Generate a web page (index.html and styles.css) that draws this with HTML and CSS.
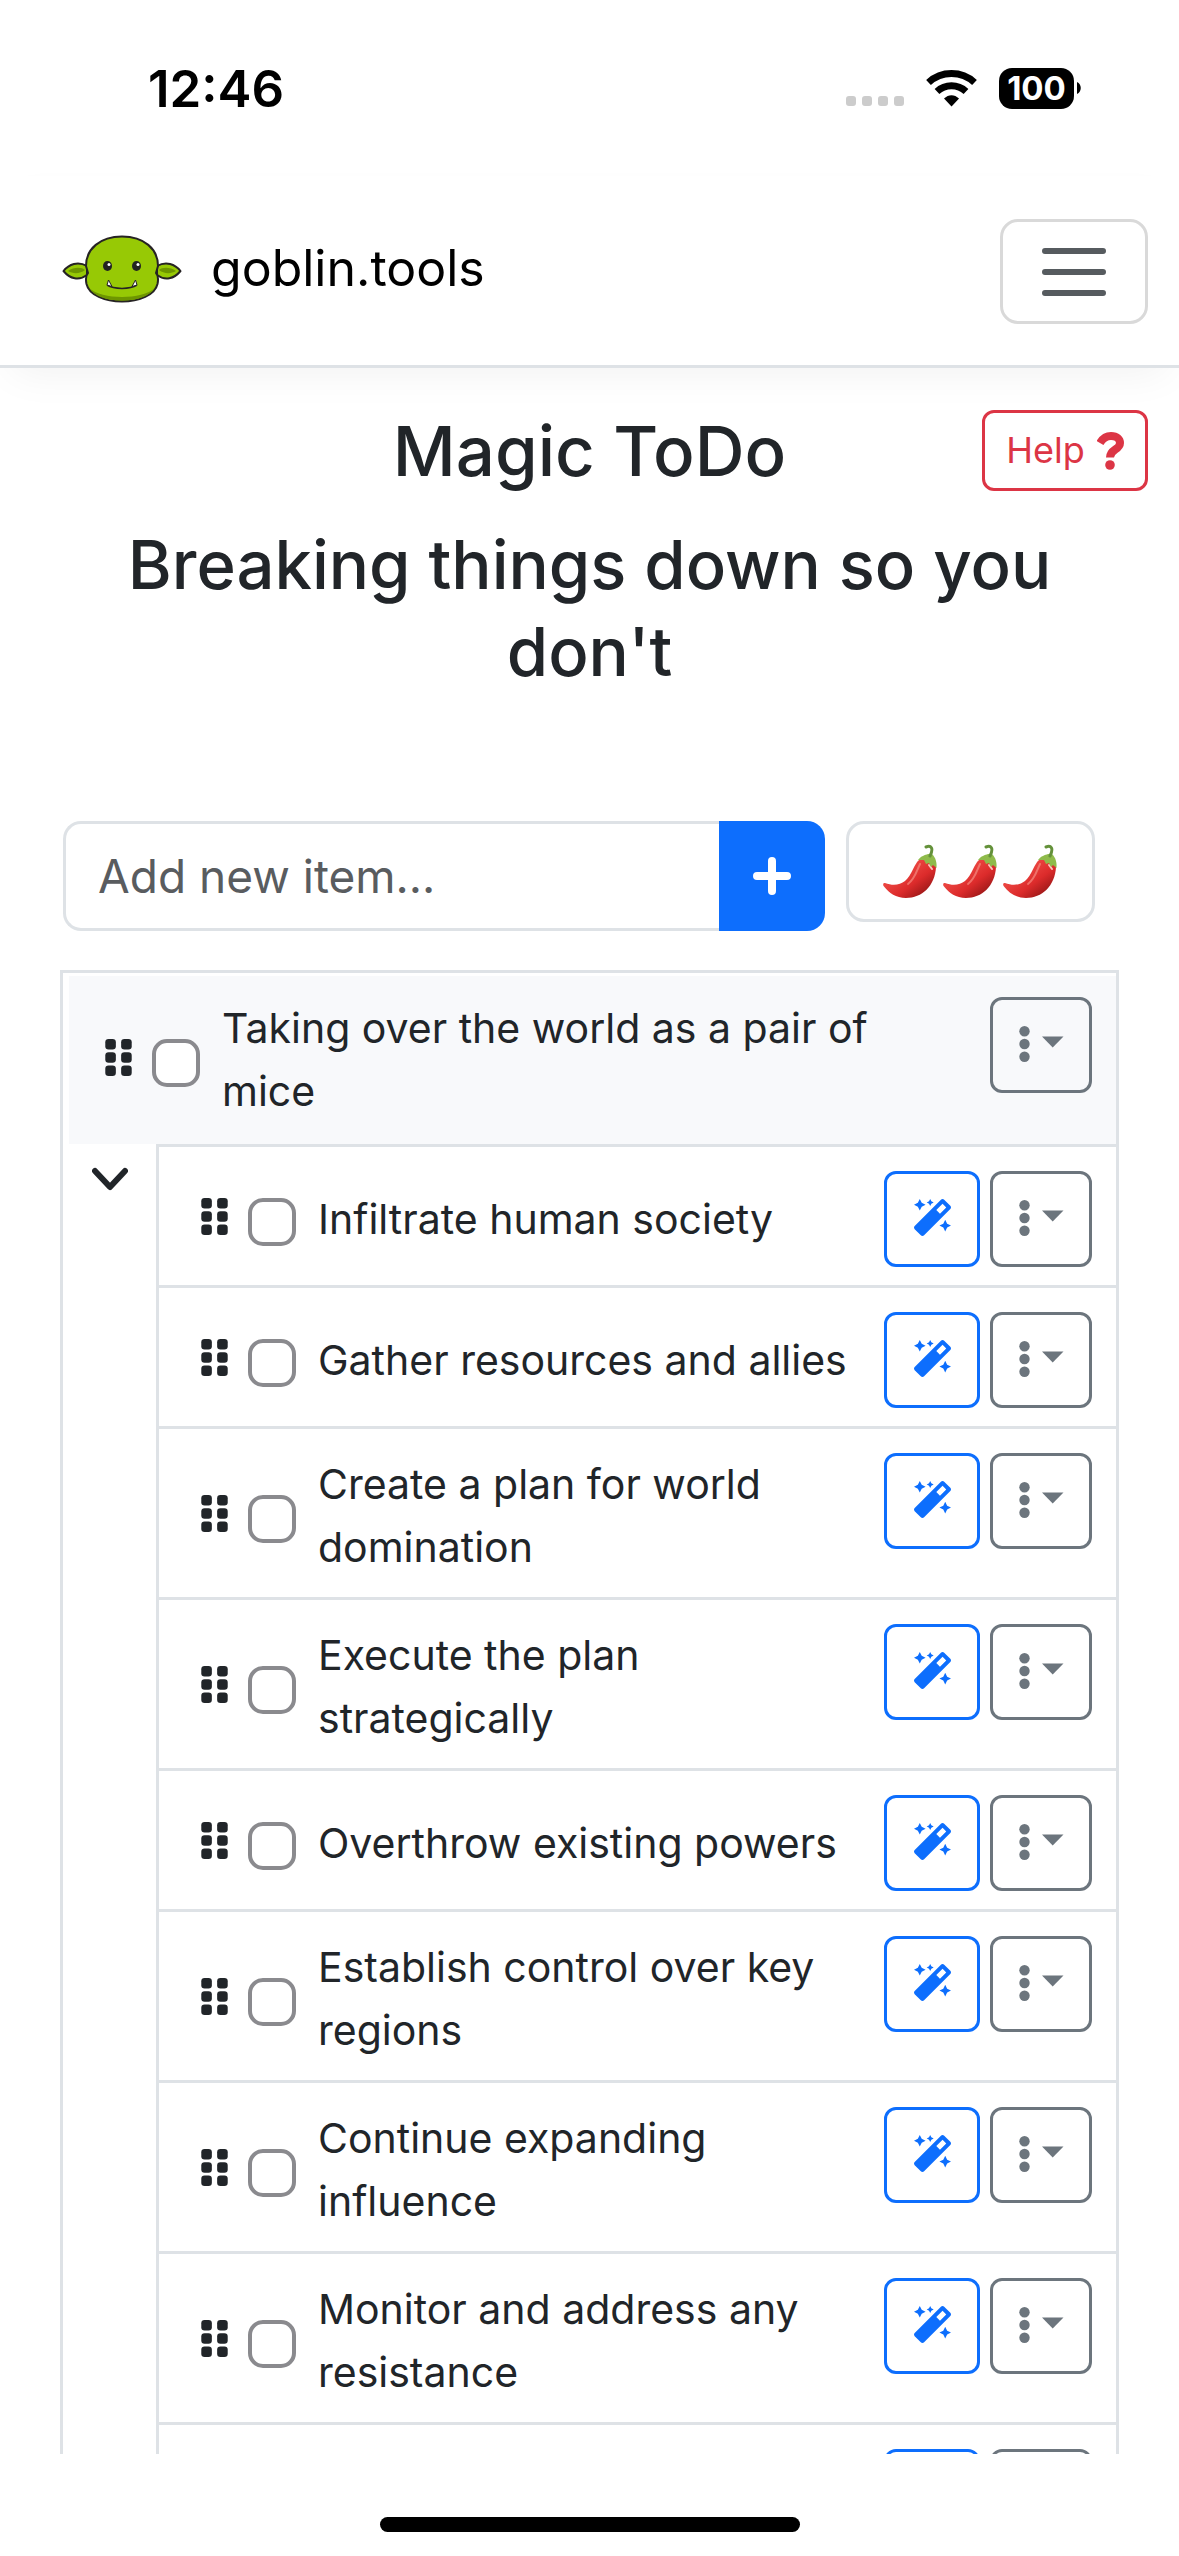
FILE: index.html
```html
<!DOCTYPE html>
<html lang="en">
<head>
<meta charset="utf-8">
<meta name="viewport" content="width=device-width, initial-scale=1">
<title>Magic ToDo - goblin.tools</title>
<link rel="stylesheet" href="styles.css">
</head>
<body>
<svg class="defs" aria-hidden="true">
  <symbol id="grip" viewBox="0 0 320 448">
    <rect width="128" height="128" rx="40"/><rect x="192" width="128" height="128" rx="40"/>
    <rect y="160" width="128" height="128" rx="40"/><rect x="192" y="160" width="128" height="128" rx="40"/>
    <rect y="320" width="128" height="128" rx="40"/><rect x="192" y="320" width="128" height="128" rx="40"/>
  </symbol>
  <symbol id="wand" viewBox="0 0 512 512">
    <path d="M224 96l16-32 32-16-32-16-16-32-16 32-32 16 32 16 16 32zM80 160l26.66-53.33L160 80l-53.34-26.67L80 0 53.34 53.33 0 80l53.34 26.67L80 160zm352 128l-26.66 53.33L352 368l53.34 26.67L432 448l26.66-53.33L512 368l-53.34-26.67L432 288zm70.62-193.77L417.77 9.38C411.53 3.12 403.34 0 395.15 0c-8.19 0-16.38 3.13-22.63 9.38L9.38 372.52c-12.5 12.5-12.5 32.76 0 45.25l84.85 84.85c6.25 6.25 14.44 9.37 22.62 9.37 8.19 0 16.38-3.12 22.63-9.37l363.14-363.15c12.5-12.48 12.5-32.75 0-45.24zM359.45 203.46l-50.91-50.91 86.6-86.6 50.91 50.91-86.6 86.6z"/>
  </symbol>
  <symbol id="more" viewBox="0 0 45 36">
    <circle cx="5.5" cy="5.3" r="5.2"/><circle cx="5.5" cy="18" r="5.2"/><circle cx="5.5" cy="30.7" r="5.2"/>
    <path d="M23 10.5h21.5L33.7 21.5z"/>
  </symbol>
  <linearGradient id="pepper-red" x1="0" y1="0" x2="1" y2="1">
    <stop offset="0.3" stop-color="#ee4a45"/><stop offset="0.6" stop-color="#dc2b2b"/><stop offset="0.9" stop-color="#8e1414"/>
  </linearGradient>
  <symbol id="pepper" viewBox="0 0 60 56">
    <path fill="url(#pepper-red)" d="M38 16C33 20 31 31 24 37 19 41 12 42 4 39 2 38.500 1.500 41 3 42.500 8 49 15 54 25 54 41 54 54 42 55 23 54 17 46 12 38 16z"/>
    <path fill="none" stroke="#f58a80" stroke-width="2" stroke-linecap="round" opacity="0.7" d="M39 20C36 26 34 35 27 40"/>
    <path fill="none" stroke="#fbc4bc" stroke-width="2" stroke-linecap="round" d="M48 21l3 4"/>
    <path fill="#8fbb4b" d="M37 16C40 12 44 11 47 10L51 10C55 14 56 19 55.500 24L52 21 50 23 48 19 45 20 43 16z"/>
    <path fill="none" stroke="#64913a" stroke-width="3" stroke-linecap="round" stroke-linejoin="round" d="M45 3C50 1 53 4 49 12"/>
  </symbol>
</svg>

<div class="screen">
  <div class="status">
    <span class="clock">12:46</span>
    <div class="indicators">
      <span class="signal"><i></i><i></i><i></i><i></i></span>
      <svg class="wifi" viewBox="0 0 51 38" aria-hidden="true">
        <g fill="none" stroke="#000" stroke-width="7">
          <path d="M2.500 13.500A34 34 0 0 1 48.500 13.500"/><path d="M11 22.500A21.500 21.500 0 0 1 40 22.500"/>
        </g>
        <path d="M18 29.500C22.500 25 28.500 25 33 29.500L25.500 37.500z"/>
      </svg>
      <span class="battery">100</span>
      <svg class="nub" viewBox="0 0 4 12" aria-hidden="true"><path d="M0 0C5 2 5 10 0 12z"/></svg>
    </div>
  </div>

  <header class="navbar">
    <a class="brand" href="#">
      <svg class="logo" viewBox="0 0 120 68" aria-hidden="true">
        <g stroke="#262324" stroke-width="2" stroke-linejoin="round">
          <path fill="#97c905" d="M25 31C16 26 7 29 1.500 36 8 44 17 46 25 40zM95 31C104 26 113 29 118.500 36 112 44 103 46 95 40z"/>
          <path fill="#97c905" d="M60 1.500C38 1.500 24 14 24 31L26 38C24 40 23.500 44 24.500 49 27 60 43 66.500 60 66.500S93 60 95.500 49C96.500 44 96 40 94 38L96 31C96 14 82 1.500 60 1.500z"/>
        </g>
        <path fill="#6e9600" d="M6 36C12 31.500 20 32 23 35 18 39 11 39 6 36zM114 36C108 31.500 100 32 97 35 102 39 109 39 114 36zM27 53C40 65 80 65 93 53 88 61 76 65.500 60 65.500S32 61 27 53z"/>
        <ellipse cx="45.500" cy="31" rx="4.500" ry="5" fill="#222"/><ellipse cx="74.500" cy="31" rx="4.500" ry="5" fill="#222"/>
        <circle cx="47" cy="29.500" r="1.500" fill="#fff"/><circle cx="76" cy="29.500" r="1.500" fill="#fff"/>
        <path fill="none" stroke="#262324" stroke-width="1.500" d="M45 50C52 54.500 68 54.500 75 50"/>
        <path fill="#fff" stroke="#262324" stroke-width="1" d="M45 50L46.500 45 50 51.500zM75 50L73.500 45 70 51.500z"/>
      </svg>
      <span>goblin.tools</span>
    </a>
    <button class="toggler" type="button" aria-label="Toggle navigation">
      <svg viewBox="0 0 64 48" aria-hidden="true"><path fill="none" stroke="#565b5f" stroke-width="6" stroke-linecap="round" d="M3 3h58M3 24h58M3 45h58"/></svg>
    </button>
  </header>

  <main class="content">
    <div class="intro">
      <h1>Magic ToDo</h1>
      <h2>Breaking things down so you don't</h2>
      <button class="help" type="button">Help
        <svg viewBox="0 0 27 38" aria-hidden="true"><path fill="none" stroke="currentColor" stroke-width="8" d="M3 11C6 6 9 4 14 4 20 4 23 7 23 11 23 18 13 17 13 25.500"/><circle cx="13" cy="33" r="4.800" fill="currentColor"/></svg>
      </button>
    </div>

    <form class="add">
      <div class="group">
        <input class="field" type="text" placeholder="Add new item..." aria-label="New item">
        <button class="plus" type="button" aria-label="Add item">
          <svg viewBox="0 0 38 38" aria-hidden="true"><path stroke="#fff" stroke-width="8" stroke-linecap="round" d="M4 19h30M19 4v30"/></svg>
        </button>
      </div>
      <button class="spice" type="button" aria-label="Spiciness level: 3">
        <svg><use href="#pepper"/></svg><svg><use href="#pepper"/></svg><svg><use href="#pepper"/></svg>
      </button>
    </form>

    <section class="tasks">
      <div class="row parent">
        <span class="lead"><svg class="grip"><use href="#grip"/></svg><input type="checkbox" id="t0"></span>
        <label for="t0">Taking over the world as a pair of mice</label>
        <button class="menu" type="button" aria-label="Options"><svg><use href="#more"/></svg></button>
      </div>
      <div class="branch">
        <button class="collapse" type="button" aria-label="Collapse">
          <svg viewBox="0 0 36 24" aria-hidden="true"><path fill="none" stroke="#212529" stroke-width="6" stroke-linecap="round" stroke-linejoin="round" d="M3 4l15 16L33 4"/></svg>
        </button>
        <ul class="children">
          <li class="row">
            <span class="lead"><svg class="grip"><use href="#grip"/></svg><input type="checkbox" id="t1"></span>
            <label for="t1">Infiltrate human society</label>
            <button class="magic" type="button" aria-label="Break down"><svg><use href="#wand"/></svg></button>
            <button class="menu" type="button" aria-label="Options"><svg><use href="#more"/></svg></button>
          </li>
          <li class="row">
            <span class="lead"><svg class="grip"><use href="#grip"/></svg><input type="checkbox" id="t2"></span>
            <label for="t2">Gather resources and allies</label>
            <button class="magic" type="button" aria-label="Break down"><svg><use href="#wand"/></svg></button>
            <button class="menu" type="button" aria-label="Options"><svg><use href="#more"/></svg></button>
          </li>
          <li class="row">
            <span class="lead"><svg class="grip"><use href="#grip"/></svg><input type="checkbox" id="t3"></span>
            <label for="t3">Create a plan for world domination</label>
            <button class="magic" type="button" aria-label="Break down"><svg><use href="#wand"/></svg></button>
            <button class="menu" type="button" aria-label="Options"><svg><use href="#more"/></svg></button>
          </li>
          <li class="row">
            <span class="lead"><svg class="grip"><use href="#grip"/></svg><input type="checkbox" id="t4"></span>
            <label for="t4">Execute the plan strategically</label>
            <button class="magic" type="button" aria-label="Break down"><svg><use href="#wand"/></svg></button>
            <button class="menu" type="button" aria-label="Options"><svg><use href="#more"/></svg></button>
          </li>
          <li class="row">
            <span class="lead"><svg class="grip"><use href="#grip"/></svg><input type="checkbox" id="t5"></span>
            <label for="t5">Overthrow existing powers</label>
            <button class="magic" type="button" aria-label="Break down"><svg><use href="#wand"/></svg></button>
            <button class="menu" type="button" aria-label="Options"><svg><use href="#more"/></svg></button>
          </li>
          <li class="row">
            <span class="lead"><svg class="grip"><use href="#grip"/></svg><input type="checkbox" id="t6"></span>
            <label for="t6">Establish control over key regions</label>
            <button class="magic" type="button" aria-label="Break down"><svg><use href="#wand"/></svg></button>
            <button class="menu" type="button" aria-label="Options"><svg><use href="#more"/></svg></button>
          </li>
          <li class="row">
            <span class="lead"><svg class="grip"><use href="#grip"/></svg><input type="checkbox" id="t7"></span>
            <label for="t7">Continue expanding influence</label>
            <button class="magic" type="button" aria-label="Break down"><svg><use href="#wand"/></svg></button>
            <button class="menu" type="button" aria-label="Options"><svg><use href="#more"/></svg></button>
          </li>
          <li class="row">
            <span class="lead"><svg class="grip"><use href="#grip"/></svg><input type="checkbox" id="t8"></span>
            <label for="t8">Monitor and address any resistance</label>
            <button class="magic" type="button" aria-label="Break down"><svg><use href="#wand"/></svg></button>
            <button class="menu" type="button" aria-label="Options"><svg><use href="#more"/></svg></button>
          </li>
          <li class="row upcoming">
            <button class="magic" type="button" aria-label="Break down"></button>
            <button class="menu" type="button" aria-label="Options"></button>
          </li>
        </ul>
      </div>
    </section>
  </main>
  <footer class="home"><span></span></footer>
</div>
</body>
</html>
```
FILE: styles.css
```css
* { box-sizing: border-box; }

body {
  margin: 0;
  background: #fff;
  color: #212529;
  font-family: Inter, "Liberation Sans", sans-serif;
  font-size: 41px;
  line-height: 63px;
}

button, input { margin: 0; font: inherit; }
button { padding: 0; background: transparent; cursor: pointer; }
svg { display: block; flex: none; }
.defs { position: absolute; width: 0; height: 0; }

.screen {
  display: flex;
  flex-direction: column;
  height: 100vh;
  overflow: hidden;
}

/* Status bar */
.status {
  display: flex;
  flex: none;
  align-items: center;
  justify-content: space-between;
  height: 176px;
  padding: 0 98px 0 148px;
  color: #000;
}
.clock { font-size: 51px; font-weight: 600; }
.indicators { display: flex; align-items: center; }
.signal { display: flex; gap: 6px; margin-top: 26px; }
.signal i { width: 10px; height: 10px; border-radius: 3px; background: #ccc; }
.wifi { width: 51px; height: 38px; margin: 0 22px; }
.battery {
  width: 75px;
  height: 41px;
  border-radius: 13px;
  background: #000;
  color: #fff;
  font-size: 33px;
  font-weight: 700;
  line-height: 41px;
  text-align: center;
}
.nub { width: 4px; height: 12px; margin-left: 3px; }

/* Navigation */
.navbar {
  display: flex;
  flex: none;
  align-items: center;
  justify-content: space-between;
  height: 192px;
  padding: 2px 31px 0 62px;
  border-bottom: 3px solid #dee2e6;
  box-shadow: 0 16px 40px -12px rgba(0, 0, 0, 0.06);
}
.brand {
  display: flex;
  align-items: center;
  gap: 29px;
  padding-bottom: 6px;
  color: #000;
  font-size: 50px;
  text-decoration: none;
}
.logo { width: 120px; height: 68px; }
.toggler {
  display: flex;
  align-items: center;
  justify-content: center;
  width: 148px;
  height: 105px;
  border: 3px solid #d9d9d9;
  border-radius: 18px;
}
.toggler svg { width: 64px; height: 48px; }

.content {
  flex: 1;
  min-height: 0;
  overflow: hidden;
}

/* Heading */
.intro {
  position: relative;
  padding: 40px 60px 0;
  text-align: center;
}
h1, h2 { margin: 0; font-weight: 500; line-height: 87px; }
h1 { font-size: 69px; }
h2 { margin-top: 26px; font-size: 67px; }
.help {
  position: absolute;
  top: 42px;
  right: 31px;
  display: flex;
  align-items: center;
  justify-content: center;
  gap: 12px;
  width: 166px;
  height: 81px;
  border: 3px solid #dc3545;
  border-radius: 12px;
  color: #dc3545;
  font-size: 36px;
}
.help svg { width: 27px; height: 38px; }

/* New item */
.add {
  display: flex;
  align-items: flex-start;
  gap: 21px;
  padding: 126px 84px 0 63px;
}
.group { display: flex; flex: 1; min-width: 0; height: 110px; }
.field {
  flex: 1;
  min-width: 0;
  padding: 0 32px;
  border: 3px solid #dee2e6;
  border-right: 0;
  border-radius: 18px 0 0 18px;
  background: #fff;
  color: #212529;
  font-size: 46px;
}
.field::placeholder { color: #595c5f; opacity: 1; }
.plus {
  display: flex;
  flex: none;
  align-items: center;
  justify-content: center;
  width: 106px;
  border: 0;
  border-radius: 0 18px 18px 0;
  background: #0d6efd;
}
.plus svg { width: 38px; height: 38px; }
.spice {
  display: flex;
  flex: none;
  align-items: center;
  justify-content: center;
  width: 249px;
  height: 101px;
  border: 3px solid #dee2e6;
  border-radius: 18px;
}
.spice svg { width: 60px; height: 56px; }

/* Tasks */
.tasks {
  margin: 39px 60px 0;
  padding-top: 3px;
  border: 3px solid #dee2e6;
}
.row {
  display: flex;
  align-items: flex-start;
  gap: 10px;
  padding: 24px 24px 18px 42px;
  border-top: 3px solid #dee2e6;
}
.parent {
  margin-left: 6px;
  padding: 21px 24px 21px 36px;
  border-top: 0;
  background: #f8f9fb;
}
.lead {
  display: flex;
  align-items: flex-start;
  align-self: center;
  gap: 20px;
  margin: 6px 12px 0 0;
}
.grip { width: 27px; height: 37px; fill: #212529; }
input[type="checkbox"] {
  appearance: none;
  width: 48px;
  height: 48px;
  border: 4px solid #8a8a8e;
  border-radius: 15px;
  background: #fff;
}
label { flex: 1; align-self: center; padding-right: 16px; }
.magic, .menu {
  display: flex;
  flex: none;
  align-items: center;
  justify-content: center;
  height: 96px;
  padding-bottom: 3px;
  border: 3px solid;
  border-radius: 12px;
}
.magic { width: 96px; color: #0d6efd; }
.magic svg { width: 37px; height: 37px; fill: currentColor; }
.menu { width: 102px; color: #6c757d; }
.menu svg { width: 45px; height: 36px; fill: currentColor; }
.branch { display: flex; align-items: flex-start; }
.collapse { width: 93px; padding: 23px 0 0 29px; border: 0; }
.collapse svg { width: 36px; height: 24px; }
.children {
  flex: 1;
  margin: 0;
  padding: 0;
  border-left: 3px solid #dee2e6;
  list-style: none;
}
.upcoming { justify-content: flex-end; }

/* Home indicator */
.home {
  display: flex;
  flex: none;
  justify-content: center;
  height: 102px;
  padding-top: 63px;
}
.home span { width: 420px; height: 15px; border-radius: 8px; background: #000; }
```
